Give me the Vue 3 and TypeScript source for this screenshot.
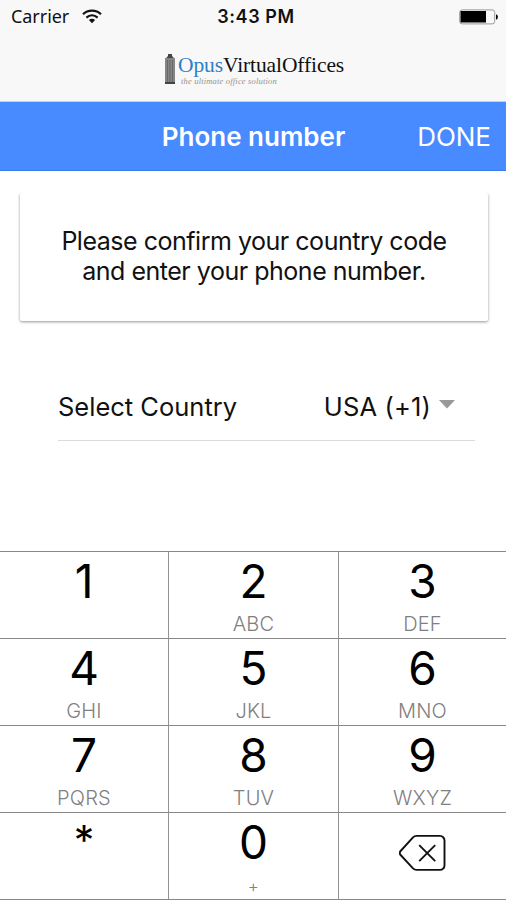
<script setup lang="ts">
interface Key {
  main: string
  sub: string
}

const keys: Key[] = [
  { main: '1', sub: '' },
  { main: '2', sub: 'ABC' },
  { main: '3', sub: 'DEF' },
  { main: '4', sub: 'GHI' },
  { main: '5', sub: 'JKL' },
  { main: '6', sub: 'MNO' },
  { main: '7', sub: 'PQRS' },
  { main: '8', sub: 'TUV' },
  { main: '9', sub: 'WXYZ' },
  { main: '*', sub: '' },
  { main: '0', sub: '+' },
  { main: 'delete', sub: '' },
]
</script>

<template>
  <div class="screen">
    <header class="top">
      <div class="status">
        <div class="left">
          <span class="carrier">Carrier</span>
          <svg class="wifi" width="20" height="15" viewBox="0 0 20 15">
            <path d="M1 5.2C6 .4 14 .4 19 5.2" />
            <path d="M4.4 8.6c3.3-3 7.9-3 11.2 0" />
            <path class="dot" d="M6.9 11c1.800-1.600 4.400-1.600 6.200 0L10 14.200z" />
          </svg>
        </div>
        <span class="time">3:43 PM</span>
        <svg class="battery" width="40" height="16" viewBox="0 0 40 16">
          <rect class="shell" x=".7" y=".9" width="35" height="14" rx="2.500" />
          <rect x="1.500" y="2" width="25.500" height="11.500" />
          <path d="M37 5.300c2.500.6 2.500 4.800 0 5.400z" />
        </svg>
      </div>
      <div class="brand">
        <svg class="tower" width="12" height="32" viewBox="0 0 12 32">
          <path class="roof" d="M4 3V1h4v2l2.500 2.500v3h-9v-3z" />
          <rect x="1" y="5" width="10" height="26" />
          <path class="floors" d="M3.500 7v22M6 7v22M8.500 7v22" />
          <path class="base" d="M1 30h10" />
        </svg>
        <div class="words">
          <div class="name"><span class="opus">Opus</span><span class="virtual">VirtualOffices</span></div>
          <div class="tag">the ultimate office solution</div>
        </div>
      </div>
    </header>

    <nav class="bar">
      <h1 class="title">Phone number</h1>
      <button class="done">DONE</button>
    </nav>

    <main class="body">
      <p class="card">
        <span class="line1">Please confirm your country code</span><br />
        <span class="line2">and enter your phone number.</span>
      </p>
      <div class="country">
        <span class="label">Select Country</span>
        <span class="value">USA (+1)</span>
        <svg class="caret" width="16" height="9" viewBox="0 0 16 9"><path d="M0 0h16L8 8.500z" /></svg>
      </div>
    </main>

    <div class="pad">
      <button v-for="key in keys" :key="key.main" class="key">
        <svg v-if="key.main === 'delete'" class="erase" width="48" height="38" viewBox="0 0 48 38">
          <path d="M17.500 1.900H41a4.500 4.500 0 0 1 4.500 4.500v25a4.500 4.500 0 0 1-4.500 4.500H17.500Q15.500 35.900 14 34.400L1.600 21Q-.2 19 1.600 17L14 3.400q1.500-1.500 3.500-1.500z" />
          <path d="M20.200 11.200l16 16M36.200 11.200l-16 16" />
        </svg>
        <template v-else>
          <span class="main" :class="{ star: key.main === '*' }">{{ key.main }}</span>
          <span class="sub" :class="{ plus: key.sub === '+' }">{{ key.sub }}</span>
        </template>
      </button>
    </div>
  </div>
</template>

<style>
body {
  margin: 0;
  background: #fff;
}
</style>

<style scoped>
.screen {
  width: 506px;
  height: 900px;
  display: flex;
  flex-direction: column;
  overflow: hidden;
  background: #fff;
  color: #111;
  font-family: Inter, "Liberation Sans", sans-serif;
}
button {
  border: 0;
  padding: 0;
  background: none;
  font-family: inherit;
  color: inherit;
}
.top {
  box-sizing: border-box;
  height: 102px;
  background: #f8f8f8;
  border-bottom: 1px solid #c3d0e6;
}
.status {
  height: 33px;
  display: grid;
  grid-template-columns: 1fr auto 1fr;
  align-items: center;
  padding: 0 7px 0 11px;
}
.left {
  display: flex;
  align-items: center;
  gap: 13px;
}
.carrier {
  font: 18px/24px "Noto Sans", sans-serif;
  letter-spacing: -0.05px;
  margin-top: -2px;
}
.wifi {
  margin-top: -1px;
  fill: none;
  stroke: #111;
  stroke-width: 2.200;
}
.wifi .dot {
  fill: #111;
  stroke: none;
}
.time {
  padding-left: 2px;
  font-size: 18px;
  font-weight: 600;
  letter-spacing: 0.6px;
}
.battery {
  justify-self: end;
  margin-top: 1px;
}
.shell {
  fill: none;
  stroke: #999;
}
.brand {
  display: flex;
  margin: 20px 0 0 164px;
  gap: 2px;
}
.tower {
  fill: #858585;
}
.roof,
.base {
  fill: #444;
}
.base {
  stroke: #444;
  stroke-width: 2;
}
.floors {
  stroke: #626262;
  stroke-width: 0.8;
}
.name {
  font: 21.500px/24px "Liberation Serif", serif;
  letter-spacing: -0.1px;
  white-space: nowrap;
  color: #111;
}
.opus {
  color: #2f7fc9;
}
.tag {
  padding-left: 3px;
  font: italic 8.500px/8px "Liberation Serif", serif;
  letter-spacing: 0.18px;
  color: #929292;
  white-space: nowrap;
}
.bar {
  box-sizing: border-box;
  height: 69px;
  display: grid;
  grid-template-columns: 1fr auto 1fr;
  align-items: center;
  padding: 1px 15px 0 16px;
  background: #488aff;
  border-bottom: 1px solid #3a7bea;
  color: #fff;
}
.title {
  grid-column: 2;
  margin: 0;
  font-size: 26px;
  font-weight: 600;
  line-height: 32px;
}
.done {
  justify-self: end;
  font-size: 26px;
  line-height: 32px;
}
.body {
  height: 380px;
  display: flex;
  flex-direction: column;
}
.card {
  box-sizing: border-box;
  width: 468px;
  height: 128px;
  margin: 22px 0 0 20px;
  padding-top: 33px;
  border-radius: 2px;
  box-shadow: 0 1px 3px rgba(0, 0, 0, 0.42);
  clip-path: inset(0 -4px -5px -4px);
  text-align: center;
  font-size: 25px;
  line-height: 30px;
  letter-spacing: -0.48px;
}
.country {
  box-sizing: border-box;
  height: 68px;
  width: 417px;
  margin: 52px 0 0 58px;
  padding-right: 20px;
  display: flex;
  align-items: center;
  border-bottom: 1px solid #dcdcdc;
  font-size: 25.500px;
}
.value {
  margin-left: auto;
  letter-spacing: 0.15px;
}
.caret {
  margin: -5px 0 0 8px;
  fill: #999;
}
.pad {
  height: 349px;
  display: grid;
  grid-template-columns: 169px 170px 167px;
  grid-template-rows: 88px 87px 87px 87px;
}
.key {
  box-sizing: border-box;
  display: flex;
  flex-direction: column;
  align-items: center;
  border-right: 1px solid #929292;
  border-bottom: 1px solid #888;
  padding-top: 1px;
}
.key:nth-child(3n) {
  border-right: 0;
}
.key:nth-child(-n + 3) {
  border-top: 1px solid #888;
}
.main {
  font-size: 46px;
  line-height: 56px;
  color: #000;
}
.star {
  font-size: 41px;
  line-height: 52px;
}
.sub {
  margin-top: 2px;
  font-size: 20px;
  line-height: 26px;
  color: #808080;
  font-weight: 300;
  letter-spacing: 0.2px;
}
.plus {
  font-size: 17px;
  line-height: 28px;
}
.erase {
  margin: 20px 0 0;
  fill: none;
  stroke: #111;
  stroke-width: 1.900;
}
</style>
